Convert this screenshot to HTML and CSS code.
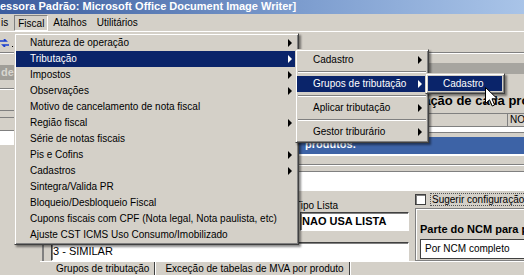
FILE: index.html
```html
<!DOCTYPE html>
<html lang="pt-BR">
<head>
<meta charset="utf-8">
<title>Fiscal</title>
<link rel="stylesheet" href="styles.css">
</head>
<body>
<div class="win">
  <div class="titlebar">essora Padrão: Microsoft Office Document Image Writer]</div>
  <div class="menubar">
    <span class="mb-item mb-cut">is</span>
    <span class="mb-item mb-pressed">Fiscal</span>
    <span class="mb-item">Atalhos</span>
    <span class="mb-item">Utilitários</span>
  </div>
  <div class="toolbar">
    <svg class="tb-icon" width="9" height="8" viewBox="0 0 9 8"><path d="M0 2h6l-2-2M9 6H3l2 2" stroke="#1a3fd0" stroke-width="1.6" fill="none"/></svg>
    <span class="tb-dot"></span>
  </div>
  <div class="content">
    <div class="sidebar">
      <div class="sb-head">de p</div>
      <div class="sb-line"></div>
      <div class="sb-line2"></div>
      <div class="sb-white"></div>
    </div>
    <div class="main">
      <div class="hdr-band"></div>
      <div class="big-title">Configuração de cada produto</div>
      <div class="grid-head">
        <span class="gh-cell gh-wide"></span>
        <span class="gh-cell">NO</span>
      </div>
      <div class="grid-row"></div>
      <div class="info-band">produtos.</div>
      <div class="sep-zone"></div>
      <div class="white-strip"></div>
      <div class="form">
        <div class="form-left">
          <div class="lbl-tipo">Tipo Lista</div>
          <div class="field field-tipo">NAO USA LISTA</div>
          <div class="field field-sim">3 - SIMILAR</div>
        </div>
        <div class="form-right">
          <div class="chk-row"><span class="chk"></span><span class="chk-lbl">Sugerir configuração</span></div>
          <div class="grpbox">
            <div class="grp-title">Parte do NCM para pesquisa</div>
            <div class="select">Por NCM completo</div>
          </div>
        </div>
      </div>
      <div class="tabs">
        <span class="tab">Grupos de tributação</span>
        <span class="tab">Exceção de tabelas de MVA por produto</span>
      </div>
    </div>
  </div>
</div>

<div class="menu m-fiscal">
  <div class="mi sub">Natureza de operação</div>
  <div class="mi sub hl">Tributação</div>
  <div class="mi sub">Impostos</div>
  <div class="mi sub">Observações</div>
  <div class="mi">Motivo de cancelamento de nota fiscal</div>
  <div class="mi sub">Região fiscal</div>
  <div class="mi">Série de notas fiscais</div>
  <div class="mi sub">Pis e Cofins</div>
  <div class="mi sub">Cadastros</div>
  <div class="mi">Sintegra/Valida PR</div>
  <div class="mi">Bloqueio/Desbloqueio Fiscal</div>
  <div class="mi">Cupons fiscais com CPF (Nota legal, Nota paulista, etc)</div>
  <div class="mi">Ajuste CST ICMS Uso Consumo/Imobilizado</div>
</div>

<div class="menu m-trib">
  <div class="mi sub">Cadastro</div>
  <div class="msep"></div>
  <div class="mi sub hl">Grupos de tributação</div>
  <div class="msep"></div>
  <div class="mi sub">Aplicar tributação</div>
  <div class="msep"></div>
  <div class="mi sub">Gestor triburário</div>
</div>

<div class="menu m-grupos">
  <div class="mi hl">Cadastro</div>
</div>

<svg class="cursor" width="13" height="20" viewBox="0 0 13 20"><path d="M0.5 0.5V16.5L4.5 12.8L7.2 19L9.6 18L7 11.8H12.3Z" fill="#fff" stroke="#000" stroke-width="1"/></svg>
</body>
</html>
```
FILE: styles.css
```css
* { box-sizing: border-box; }
html, body { margin: 0; padding: 0; }
body {
  width: 524px; height: 275px; overflow: hidden; position: relative;
  background: #d4d0c8;
  font-family: "Liberation Sans", Arial, sans-serif; font-size: 10px; color: #000;
}
.win { display: flex; flex-direction: column; height: 275px; }
.titlebar {
  height: 14px; flex: none; white-space: nowrap; overflow: hidden;
  background: linear-gradient(to right, #3b5c9e, #7f9fd0 60%, #a9c4e8);
  color: #fff; font-weight: bold; font-size: 11px; line-height: 13px;
}
.menubar { height: 18px; flex: none; display: flex; align-items: center; border-bottom: 1px solid #fff; }
.mb-item { height: 16px; line-height: 15px; padding: 0 5px; font-size: 10px; }
.mb-cut { padding: 0 6px 0 1px; }
.mb-pressed { border-top: 1px solid #808080; border-left: 1px solid #808080; border-right: 1px solid #fff; border-bottom: 1px solid #fff; padding: 0 3px; }
.toolbar { height: 21px; flex: none; display: flex; align-items: center; gap: 3px; border-bottom: 1px solid #808080; box-shadow: 0 1px 0 #fff; padding-top: 2px; }
.tb-icon { display: block; }
.tb-dot { width: 1px; height: 1px; background: #000; margin-top: 6px; }
.content { flex: 1; display: flex; margin-top: 1px; }
.sidebar { width: 40px; flex: none; display: flex; flex-direction: column; }
.sb-head { margin-top: 11px; height: 15px; background: #a09e98; color: #d8d6d0; font-weight: bold; font-size: 11px; line-height: 15px; padding-left: 1px; overflow: hidden; white-space: nowrap; }
.sb-line { margin-top: 8px; height: 2px; border-top: 1px solid #808080; border-bottom: 1px solid #fff; }
.sb-line2 { margin-top: 20px; height: 8px; border-top: 1px solid #808080; border-bottom: 1px solid #808080; }
.sb-white { margin-top: 12px; height: 15px; background: #fff; border-top: 1px solid #808080; }
.main { flex: 1; display: flex; flex-direction: column; }
.hdr-band { margin-top: 9px; height: 11px; background: #a7a5a0; }
.big-title { margin-top: 20px; height: 16px; padding-left: 329px; font-weight: bold; font-size: 13px; line-height: 14px; white-space: nowrap; overflow: hidden; }
.grid-head { margin-top: 3px; height: 14px; display: flex; border-top: 1px solid #808080; border-bottom: 1px solid #808080; }
.gh-cell { border-right: 1px solid #808080; line-height: 12px; font-size: 10px; padding-left: 2px; }
.gh-wide { width: 468px; }
.grid-row { height: 6px; background: #fff; border-bottom: 1px solid #808080; }
.info-band { margin-top: 4px; height: 17px; background: #3d63a6; color: #fff; font-weight: bold; font-size: 11px; line-height: 15px; padding-left: 265px; }
.sep-zone { height: 17px; border-top: 2px solid #fff; background: linear-gradient(#d4d0c8 0 8px, #808080 8px 9px, #fff 9px 10px, #d4d0c8 10px); }
.white-strip { height: 20px; background: #fff; border-top: 1px solid #808080; }
.form { height: 70px; display: flex; gap: 8px; }
.form-left { width: 365px; display: grid; grid-template-columns: 7px 249px 109px; grid-template-rows: 21px 19px 11px 19px; border-left: 2px solid #808080; margin-left: 2px; }
.lbl-tipo { grid-column: 3; grid-row: 1; align-self: end; font-size: 10px; line-height: 12px; margin-left: -5px; }
.field { background: #fff; border-top: 1px solid #404040; border-left: 1px solid #404040; border-right: 1px solid #fff; border-bottom: 1px solid #fff; box-shadow: inset 1px 1px 0 #808080; white-space: nowrap; overflow: hidden; }
.field-tipo { grid-column: 3; grid-row: 2; font-weight: bold; font-size: 11px; line-height: 17px; padding-left: 1px; }
.field-sim { grid-column: 2 / 4; grid-row: 4; font-size: 11px; line-height: 17px; padding-left: 1px; }
.form-right { flex: 1; display: flex; flex-direction: column; padding-top: 3px; }
.chk-row { height: 12px; display: flex; align-items: center; gap: 5px; }
.chk { width: 11px; height: 11px; background: #fff; border: 1px solid #404040; box-shadow: inset 1px 1px 0 #808080; }
.chk-lbl { font-size: 10px; outline: 1px dotted #555; line-height: 11px; padding: 0 1px; white-space: nowrap; }
.grpbox { margin-top: 3px; height: 55px; border: 1px solid #808080; border-right: none; box-shadow: inset 1px 1px 0 #fff; padding: 14px 0 0 4px; }
.grp-title { font-weight: bold; font-size: 11px; line-height: 12px; white-space: nowrap; overflow: hidden; }
.select { margin-top: 4px; height: 20px; background: #fff; border: 1px solid #404040; border-right: none; font-size: 10px; line-height: 18px; padding-left: 4px; white-space: nowrap; }
.tabs { flex: 1; display: flex; padding-left: 6px; border-top: 1px solid #fff; }
.tab { padding: 1px 5px 0 10px; font-size: 10px; line-height: 12px; border-right: 1px solid #404040; box-shadow: 1px 0 0 #fff; white-space: nowrap; }

.menu {
  position: absolute; background: #d4d0c8;
  border: 1px solid; border-color: #d4d0c8 #404040 #404040 #d4d0c8;
  box-shadow: inset 1px 1px 0 #fff, inset -1px -1px 0 #808080, 2px 2px 2px rgba(0,0,0,0.45);
  padding: 1px 1px;
}
.mi { height: 16px; line-height: 16px; white-space: nowrap; position: relative; font-size: 10px; }
.mi.sub::after {
  content: ""; position: absolute; top: 4px; width: 0; height: 0;
  border-left: 4px solid #000; border-top: 4px solid transparent; border-bottom: 4px solid transparent;
}
.mi.hl { background: #0a246a; color: #fff; }
.mi.hl.sub::after { border-left-color: #fff; }
.msep { height: 8px; background: linear-gradient(#d4d0c8 0 3px, #808080 3px 4px, #fff 4px 5px, #d4d0c8 5px); margin: 0 1px; }
.m-fiscal { left: 14px; top: 33px; width: 285px; padding-top: 1px; }
.m-fiscal .mi { padding-left: 14px; }
.m-fiscal .mi.sub::after { right: 5px; }
.m-trib { left: 295px; top: 49px; width: 134px; padding-top: 2px; padding-bottom: 2px; }
.m-trib .mi { padding-left: 16px; }
.m-trib .mi.sub::after { right: 5px; }
.m-grupos { left: 425px; top: 73px; width: 80px; padding: 2px; }
.m-grupos .mi { height: 15px; line-height: 15px; padding-left: 15px; }
.cursor { position: absolute; left: 485px; top: 87px; }
```
